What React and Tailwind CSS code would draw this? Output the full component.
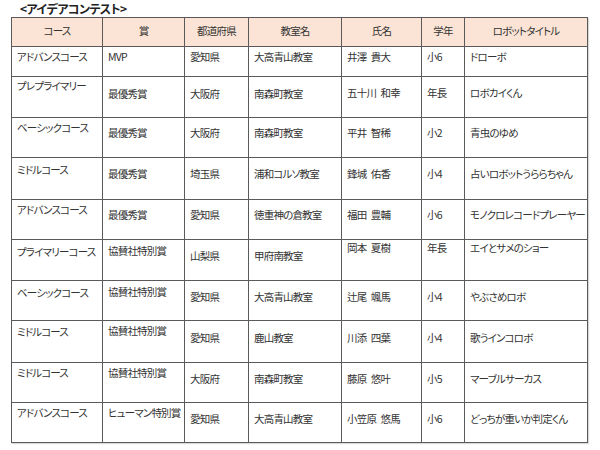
const headers = ['コース', '賞', '都道府県', '教室名', '氏名', '学年', 'ロボットタイトル']

// h: content height, p: padding-top classes for col1, col2, col3-4, col5-7
const rows = [
  {h: 'h-[29px]', p: ['pt-[3px]', 'pt-[3px]', 'pt-[3px]', 'pt-[3px]'], cells: ['アドバンスコース', 'MVP', '愛知県', '大高青山教室', '井澤\u2002貴大', '小6', 'ドローボ']},
  {h: 'h-[40px]', p: ['pt-[2px]', 'pt-[10px]', 'pt-[10px]', 'pt-[9px]'], cells: ['プレプライマリー', '最優秀賞', '大阪府', '南森町教室', '五十川\u2002和幸', '年長', 'ロボカイくん']},
  {h: 'h-[39px]', p: ['pt-[3px]', 'pt-[8px]', 'pt-[8px]', 'pt-[8px]'], cells: ['ベーシックコース', '最優秀賞', '大阪府', '南森町教室', '平井\u2002智稀', '小2', '青虫のゆめ']},
  {h: 'h-[41px]', p: ['pt-[5px]', 'pt-[9px]', 'pt-[9px]', 'pt-[9px]'], cells: ['ミドルコース', '最優秀賞', '埼玉県', '浦和コルソ教室', '鋒城\u2002佑香', '小4', '占いロボットうららちゃん']},
  {h: 'h-[39px]', p: ['pt-[3px]', 'pt-[8px]', 'pt-[8px]', 'pt-[8px]'], cells: ['アドバンスコース', '最優秀賞', '愛知県', '徳重神の倉教室', '福田\u2002豊輔', '小6', 'モノクロレコードプレーヤー']},
  {h: 'h-[40px]', p: ['pt-[5px]', 'pt-[4px]', 'pt-[9px]', 'pt-[1px]'], cells: ['プライマリーコース', '協賛社特別賞', '山梨県', '甲府南教室', '岡本\u2002夏樹', '年長', 'エイとサメのショー']},
  {h: 'h-[39px]', p: ['pt-[5px]', 'pt-[4px]', 'pt-[9px]', 'pt-[9px]'], cells: ['ベーシックコース', '協賛社特別賞', '愛知県', '大高青山教室', '辻尾\u2002颯馬', '小4', 'やぶさめロボ']},
  {h: 'h-[41px]', p: ['pt-[4px]', 'pt-[3px]', 'pt-[10px]', 'pt-[10px]'], cells: ['ミドルコース', '協賛社特別賞', '愛知県', '鹿山教室', '川添\u2002四葉', '小4', '歌うインコロボ']},
  {h: 'h-[39px]', p: ['pt-[3px]', 'pt-[3px]', 'pt-[9px]', 'pt-[9px]'], cells: ['ミドルコース', '協賛社特別賞', '大阪府', '南森町教室', '藤原\u2002悠叶', '小5', 'マーブルサーカス']},
  {h: 'h-[39px]', p: ['pt-[3px]', 'pt-[3px]', 'pt-[9px]', 'pt-[9px]'], cells: ['アドバンスコース', 'ヒューマン特別賞', '愛知県', '大高青山教室', '小笠原\u2002悠馬', '小6', 'どっちが重いか判定くん']},
]

function padFor(p, i) {
  if (i === 0) return p[0]
  if (i === 1) return p[1]
  if (i < 4) return p[2]
  return p[3]
}

export default function App() {
  return (
    <div className="w-[600px] h-[450px] bg-white overflow-hidden font-['Noto_Sans_CJK_JP','Noto_Sans',sans-serif] [font-feature-settings:'palt'] text-[#333]">
      <div className="pl-[20px] h-[17px] text-[12px] leading-[17px] font-bold tracking-[-0.6px] text-[#222]">
        &lt;アイデアコンテスト&gt;
      </div>
      <div className="ml-[11px] w-[577px] border border-[#5a5a5a] bg-[#5a5a5a] grid grid-cols-[90px_81px_63px_92px_79px_42px_122px] gap-px text-[10.5px] leading-[14px] tracking-[-0.8px] shadow-[1px_1px_1px_rgba(0,0,0,0.15)]">
        {headers.map((h) => (
          <div key={h} className="h-[28px] bg-[#fbe4d5] pt-[6px] text-center">
            {h}
          </div>
        ))}
        {rows.map((r, ri) =>
          r.cells.map((c, ci) => (
            <div key={ri + '-' + ci} className={`${r.h} ${padFor(r.p, ci)} bg-white pl-[5px] whitespace-nowrap`}>
              {c}
            </div>
          ))
        )}
      </div>
    </div>
  )
}
